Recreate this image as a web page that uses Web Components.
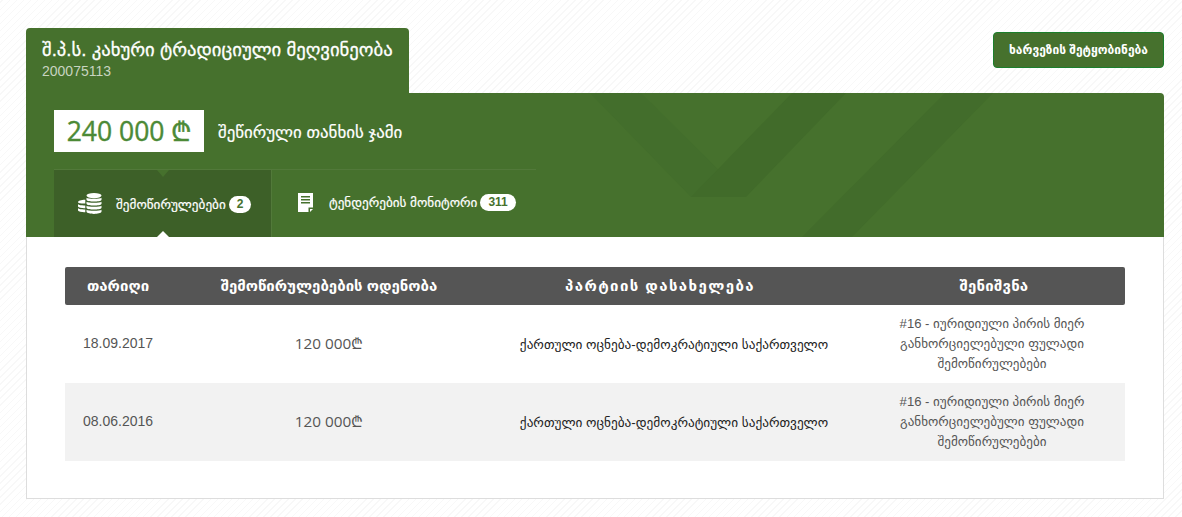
<!DOCTYPE html>
<html lang="ka">
<head>
<meta charset="utf-8">
<title>შემოწირულებები</title>
<style>
html, body{ margin: 0; padding: 0; }
body{
    height: 517px;
    overflow: hidden;
    box-sizing: border-box;
    padding: 28px 18px 0 26px;
    font-family: "Liberation Sans", "DejaVu Sans", sans-serif;
    background: repeating-linear-gradient(-45deg, #fff 0 4px, #f8f8f8 4px 5px);
}
</style>
</head>
<body>
<org-header name="შ.პ.ს. კახური ტრადიციული მეღვინეობა" code="200075113" action="ხარვეზის შეტყობინება"></org-header>
<summary-band total="240 000" label="შეწირული თანხის ჯამი">
    <band-tab active text="შემოწირულებები" count="2" icon="coins"></band-tab>
    <band-tab text="ტენდერების მონიტორი" count="311" icon="doc"></band-tab>
</summary-band>
<table-card>
    <donation-row head date="თარიღი" amount="შემოწირულებების ოდენობა" party="პარტიის დასახელება" note="შენიშვნა"></donation-row>
    <donation-row date="18.09.2017" amount="120 000₾" party="ქართული ოცნება-დემოკრატიული საქართველო" note="#16 - იურიდიული პირის მიერ განხორციელებული ფულადი შემოწირულებები"></donation-row>
    <donation-row alt date="08.06.2016" amount="120 000₾" party="ქართული ოცნება-დემოკრატიული საქართველო" note="#16 - იურიდიული პირის მიერ განხორციელებული ფულადი შემოწირულებები"></donation-row>
</table-card>
<script>
class OrgHeader extends HTMLElement {
    connectedCallback(){
        this.attachShadow({mode:'open'});
        this.shadowRoot.innerHTML = `
        <style>
        :host{ display: flex; justify-content: space-between; align-items: flex-start; height: 65px; }
        *{ box-sizing: border-box; }
        .tab{
            width: 383px; height: 65px;
            background: #46712d;
            border-radius: 4px 4px 0 0;
            padding: 10px 0 0 16px;
            color: #fff;
        }
        .name{ font-size: 18.700px; line-height: 23px; -webkit-text-stroke: .3px #fff; white-space: nowrap; }
        .code{ font-size: 14px; line-height: 18px; margin-top: 1px; color: #c8d4c0; }
        .btn{
            margin-top: 4px;
            width: 171px; height: 36px;
            background: #46712d;
            border: 1px solid #1b7f2c;
            border-radius: 4px;
            color: #fff;
            font-size: 12px;
            font-weight: 700;
            display: flex; align-items: center; justify-content: center;
            white-space: nowrap;
        }
        </style>
        <div class="tab">
            <div class="name">${this.getAttribute('name')}</div>
            <div class="code">${this.getAttribute('code')}</div>
        </div>
        <div class="btn">${this.getAttribute('action')}</div>`;
    }
}

class SummaryBand extends HTMLElement {
    connectedCallback(){
        this.attachShadow({mode:'open'});
        this.shadowRoot.innerHTML = `
        <style>
        :host{
            display: block; position: relative; overflow: hidden;
            height: 144px;
            background: #46712d;
            border-radius: 0 4px 0 0;
        }
        *{ box-sizing: border-box; }
        svg.deco{ position: absolute; left: 0; top: 0; }
        .inner{ position: relative; padding: 17px 0 0 28px; }
        .sum{ display: flex; align-items: center; height: 42px; }
        .box{
            width: 150px; height: 42px;
            background: #fff;
            color: #4c8a36;
            font: 26.500px/42px "Open Sans", "DejaVu Sans", sans-serif;
            -webkit-text-stroke: .4px #4c8a36;
            text-align: center;
            white-space: nowrap;
        }
        .label{ margin: 3px 0 0 14px; color: #fff; font-size: 16.900px; -webkit-text-stroke: .2px #fff; white-space: nowrap; }
        .tabs{
            display: flex;
            width: 482px; height: 68px;
            margin-top: 17px;
            border-top: 1px solid #52793a;
        }
        </style>
        <svg class="deco" width="1138" height="144" viewBox="0 0 1138 144">
            <polygon points="564,0 615,0 720,104 665,104" fill="#436e2c"/>
            <polygon points="766,0 820,0 720,104 665,104" fill="#416b2a"/>
            <polygon points="919,0 967,0 826,144 776,144" fill="#426c2b"/>
        </svg>
        <div class="inner">
            <div class="sum">
                <div class="box">${this.getAttribute('total')} ₾</div>
                <div class="label">${this.getAttribute('label')}</div>
            </div>
            <div class="tabs"><slot></slot></div>
        </div>`;
    }
}

const ICONS = {
    coins: `<svg width="24" height="21" viewBox="0 0 24 21" fill="#fff" style="margin-top:-2px">
        <ellipse cx="16" cy="2.6" rx="7.5" ry="2.6"/>
        <path d="M8.500 4.800c1.500 1.300 13.500 1.300 15 0v2.200c-1 2-14 2-15 0z"/>
        <path d="M8.500 8.800c1.500 1.300 13.500 1.300 15 0v2.200c-1 2-14 2-15 0z"/>
        <path d="M8.500 12.800c1.500 1.300 13.500 1.300 15 0v2.200c-1 2-14 2-15 0z"/>
        <path d="M8.500 16.800c1.500 1.300 13.500 1.300 15 0v2c-1 2.800-14 2.800-15 0z"/>
        <path d="M0 9.200c0-1.600 3-2.400 7.300-2.500v3.700C3.500 10.400.6 10.500 0 9.200z"/>
        <path d="M0 11.300c1.100 1 4.300 1.200 7.300 1.100v2.800c-3.300.1-6.600-.3-7.300-1.700z"/>
        <path d="M0 15.300c1.100 1 4.300 1.200 7.300 1.100v2.800c-3.300.1-6.600-.3-7.300-1.700z"/>
    </svg>`,
    doc: `<svg width="15" height="19" viewBox="0 0 15 19">
        <path fill="#fff" d="M0 0h15v14.500h-4.500v4.500h-10.500z"/>
        <path fill="#fff" d="M12 16h3l-3 3z"/>
        <path fill="#46712d" d="M3 3h9v1.500h-9zM3 6h9v1.500h-9zM3 9h9v1.500h-9z"/>
    </svg>`
};

class BandTab extends HTMLElement {
    connectedCallback(){
        this.attachShadow({mode:'open'});
        this.shadowRoot.innerHTML = `
        <style>
        :host{
            display: flex; align-items: center; position: relative;
            height: 67px;
            color: #fff;
            font-size: 13.200px;
            white-space: nowrap;
            padding: 0 0 2px 26px;
            box-sizing: border-box;
        }
        :host([active]){
            width: 218px;
            padding: 2px 0 0 24px;
            background: #3d6028;
            border-right: 1px solid #52793a;
        }
        .ico{ display: flex; width: 31px; }
        :host([active]) .ico{ width: 38px; }
        .txt{ margin-right: 3px; -webkit-text-stroke: .2px #fff; }
        .badge{
            background: #fff; color: #46712d;
            font-size: 12px; font-weight: 700; line-height: 17px;
            height: 17px; min-width: 22px; padding: 0 8px;
            box-sizing: border-box;
            border-radius: 9px;
            text-align: center;
        }
        :host([active])::before, :host([active])::after{
            content: ""; position: absolute; left: 103px;
            border-left: 6px solid transparent; border-right: 6px solid transparent;
        }
        :host([active])::before{ top: 0; border-top: 7px solid #46712d; }
        :host([active])::after{ bottom: 0; border-bottom: 6px solid #fff; }
        </style>
        <span class="ico">${ICONS[this.getAttribute('icon')]}</span>
        <span class="txt">${this.getAttribute('text')}</span>
        <span class="badge">${this.getAttribute('count')}</span>`;
    }
}

class TableCard extends HTMLElement {
    connectedCallback(){
        this.attachShadow({mode:'open'});
        this.shadowRoot.innerHTML = `
        <style>
        :host{
            display: block;
            box-sizing: border-box;
            height: 262px;
            padding: 30px 38px 0;
            background: #fff;
            border: 1px solid #ddd;
            border-top: 0;
        }
        </style>
        <slot></slot>`;
    }
}

class DonationRow extends HTMLElement {
    connectedCallback(){
        this.attachShadow({mode:'open'});
        const a = (n) => this.getAttribute(n);
        this.shadowRoot.innerHTML = `
        <style>
        :host{
            display: grid;
            grid-template-columns: 106px 316px 346px 292px;
            align-items: center;
            height: 78px;
            text-align: center;
            color: #555;
            font-size: 13.100px;
        }
        :host([alt]){ background: #f2f2f2; }
        :host([head]){
            height: 38px;
            background: #555;
            color: #fff;
            font-weight: 700;
            font-size: 15px;
            border-radius: 2px;
            white-space: nowrap;
        }
        .date{ font-size: 14px; margin-top: -2px; }
        .amount{ font: 15.300px "Open Sans", "DejaVu Sans", sans-serif; margin-top: -2px; }
        .party{ color: #222; white-space: nowrap; margin-left: 28px; font-size: 13.250px; }
        .note{ padding: 0 20px 0 46px; line-height: 20px; }
        :host([head]) div{ font: inherit; color: inherit; margin: 0; line-height: normal; }
        :host([head]) .party{ letter-spacing: 1.400px; }
        :host([head]) .note{ padding: 0 0 0 30px; letter-spacing: .2px; }
        </style>
        <div class="date">${a('date')}</div>
        <div class="amount">${a('amount')}</div>
        <div class="party">${a('party')}</div>
        <div class="note">${a('note')}</div>`;
    }
}

customElements.define('org-header', OrgHeader);
customElements.define('summary-band', SummaryBand);
customElements.define('band-tab', BandTab);
customElements.define('table-card', TableCard);
customElements.define('donation-row', DonationRow);
</script>
</body>
</html>
